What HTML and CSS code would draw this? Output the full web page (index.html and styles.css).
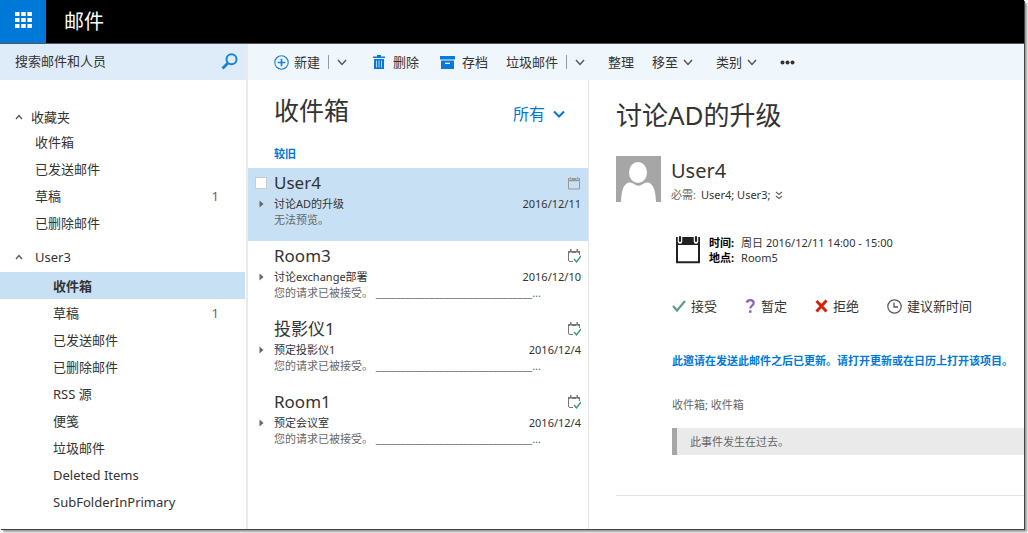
FILE: index.html
```html
<!DOCTYPE html>
<html lang="zh-CN">
<head>
<meta charset="utf-8">
<title>邮件</title>
<link rel="stylesheet" href="styles.css">
</head>
<body>
<svg class="symbols" aria-hidden="true">
  <symbol id="chevron" viewBox="0 0 10 7"><path d="M1 1l4 4.500L9 1" fill="none" stroke="currentColor" stroke-width="1.400"/></symbol>
  <symbol id="chevron-bold" viewBox="0 0 12 8"><path d="M1 1.500l5 5 5-5" fill="none" stroke="currentColor" stroke-width="2"/></symbol>
  <symbol id="caret-up" viewBox="0 0 8 6"><path d="M1 5l3-3.500L7 5" fill="none" stroke="currentColor" stroke-width="1.300"/></symbol>
  <symbol id="expand" viewBox="0 0 5 8"><path d="M.5 .5l4 3.500-4 3.500z" fill="currentColor"/></symbol>
  <symbol id="event" viewBox="0 0 14 14"><path d="M1.500 3v10h11V3" fill="none" stroke="currentColor"/><path d="M1 2h1.500v2H1zM4.500 2h5v2h-5zM11.500 2H13v2h-1.500zM1 4h12v1.200H1zM3 1h1v2.500H3zM10 1h1v2.500h-1z" fill="currentColor"/></symbol>
  <symbol id="event-ok" viewBox="0 0 14 14"><path d="M6 12.500H3Q1.500 12.500 1.500 11V3.500M12.500 3v3" fill="none" stroke="#777"/><path d="M1 2h2.500v2H1zM4.500 2h5v2h-5zM10.500 2H13v2h-2.500zM3 0h1.500v3H3zM9.500 0H11v3H9.500z" fill="#777"/><path d="M7 10l2.500 2.800L14 7" fill="none" stroke="#3f9d7c" stroke-width="1.400"/></symbol>
</svg>
<div class="app">
  <header class="topbar">
    <button class="launcher" aria-label="应用启动器">
      <svg width="17" height="16" viewBox="0 0 17 16" fill="#fff"><path d="M0 0h4.500v4H0zM6.200 0h4.500v4H6.200zM12.400 0h4.500v4h-4.500zM0 6h4.500v4H0zM6.200 6h4.500v4H6.200zM12.400 6h4.500v4h-4.500zM0 12h4.500v4H0zM6.200 12h4.500v4H6.200zM12.400 12h4.500v4h-4.500z"/></svg>
    </button>
    <h1 class="brand">邮件</h1>
  </header>
  <div class="body">
    <aside class="sidebar">
      <form class="search">
        <input class="search-input" type="text" placeholder="搜索邮件和人员" aria-label="搜索邮件和人员">
        <button class="search-button" type="button" aria-label="搜索">
          <svg width="17" height="17" viewBox="0 0 17 17" fill="none" stroke="#1b80d8"><circle cx="10.500" cy="6.300" r="5" stroke-width="2"/><path d="M7 10l-5.500 5.500" stroke-width="2.800"/></svg>
        </button>
      </form>
      <nav class="folders">
        <section class="group">
          <h2 class="group-title"><svg class="caret"><use href="#caret-up"/></svg>收藏夹</h2>
          <ul class="folder-list favorites">
            <li><a class="folder" href="#">收件箱</a></li>
            <li><a class="folder" href="#">已发送邮件</a></li>
            <li><a class="folder" href="#">草稿<span class="count">1</span></a></li>
            <li><a class="folder" href="#">已删除邮件</a></li>
          </ul>
        </section>
        <section class="group">
          <h2 class="group-title account"><svg class="caret"><use href="#caret-up"/></svg>User3</h2>
          <ul class="folder-list mailbox">
            <li><a class="folder current" href="#">收件箱</a></li>
            <li><a class="folder" href="#">草稿<span class="count">1</span></a></li>
            <li><a class="folder" href="#">已发送邮件</a></li>
            <li><a class="folder" href="#">已删除邮件</a></li>
            <li><a class="folder" href="#">RSS 源</a></li>
            <li><a class="folder" href="#">便笺</a></li>
            <li><a class="folder" href="#">垃圾邮件</a></li>
            <li><a class="folder" href="#">Deleted Items</a></li>
            <li><a class="folder" href="#">SubFolderInPrimary</a></li>
          </ul>
        </section>
      </nav>
    </aside>
    <main class="main">
      <div class="toolbar">
        <div class="split">
          <button class="tool"><svg width="15" height="15" viewBox="0 0 15 15" fill="none" stroke="#1b80d8"><circle cx="7.500" cy="7.500" r="6.700" stroke-width="1.100"/><path d="M7.500 3.700v7.600M3.700 7.500h7.600" stroke-width="1.700"/></svg>新建</button>
          <span class="divider"></span>
          <button class="tool more" aria-label="新建选项"><svg class="chevron"><use href="#chevron"/></svg></button>
        </div>
        <button class="tool"><svg width="18" height="14" viewBox="0 0 18 14" fill="#0a78d6"><path d="M3 1.500h4V0h4v1.500h4V3H3zM4 4h10v10H4z"/><path d="M6.500 5.500v7M9 5.500v7M11.500 5.500v7" stroke="#c3def5" stroke-width=".9"/></svg>删除</button>
        <button class="tool"><svg width="20" height="13" viewBox="0 0 20 13" fill="#0a78d6"><path d="M3 0h15v3.500H3zM4 4.500h13V13H4z"/><path d="M8 7.300h5" stroke="#fff" stroke-width="1.200"/></svg>存档</button>
        <div class="split">
          <button class="tool">垃圾邮件</button>
          <span class="divider"></span>
          <button class="tool more" aria-label="垃圾邮件选项"><svg class="chevron"><use href="#chevron"/></svg></button>
        </div>
        <button class="tool">整理</button>
        <button class="tool more">移至<svg class="chevron"><use href="#chevron"/></svg></button>
        <button class="tool more">类别<svg class="chevron"><use href="#chevron"/></svg></button>
        <button class="tool" aria-label="更多"><svg width="15" height="5" viewBox="0 0 15 5" fill="#333"><circle cx="2.500" cy="2.500" r="2"/><circle cx="7.500" cy="2.500" r="2"/><circle cx="12.500" cy="2.500" r="2"/></svg></button>
      </div>
      <div class="panes">
        <section class="messages">
          <div class="messages-head">
            <h2 class="pane-title">收件箱</h2>
            <button class="filter">所有<svg width="12" height="8"><use href="#chevron-bold"/></svg></button>
          </div>
          <h3 class="period">较旧</h3>
          <ul class="message-list">
            <li class="message selected">
              <input class="pick" type="checkbox" aria-label="选择 User4">
              <span class="sender">User4</span><svg class="event muted"><use href="#event"/></svg>
              <svg class="expand"><use href="#expand"/></svg>
              <span class="subject">讨论AD的升级</span><time class="date">2016/12/11</time>
              <p class="preview">无法预览。</p>
            </li>
            <li class="message">
              <span class="sender">Room3</span><svg class="event"><use href="#event-ok"/></svg>
              <svg class="expand"><use href="#expand"/></svg>
              <span class="subject">讨论exchange部署</span><time class="date">2016/12/10</time>
              <p class="preview">您的请求已被接受。 ________________________________...</p>
            </li>
            <li class="message">
              <span class="sender">投影仪1</span><svg class="event"><use href="#event-ok"/></svg>
              <svg class="expand"><use href="#expand"/></svg>
              <span class="subject">预定投影仪1</span><time class="date">2016/12/4</time>
              <p class="preview">您的请求已被接受。 ________________________________...</p>
            </li>
            <li class="message">
              <span class="sender">Room1</span><svg class="event"><use href="#event-ok"/></svg>
              <svg class="expand"><use href="#expand"/></svg>
              <span class="subject">预定会议室</span><time class="date">2016/12/4</time>
              <p class="preview">您的请求已被接受。 ________________________________...</p>
            </li>
          </ul>
        </section>
        <article class="reading">
          <h2 class="mail-title">讨论AD的升级</h2>
          <div class="from">
            <svg class="avatar" viewBox="0 0 45 46"><path d="M0 0h45v46H0z" fill="#a6a6a6"/><ellipse cx="22" cy="16.500" rx="9" ry="10.500" fill="#fff"/><path d="M5 46C5.500 35 7 28 13 26.500Q16 26 18 28Q22 31.500 27 28Q29 26 32 26.500C38 28 39.500 35 40 46z" fill="#fff"/></svg>
            <div>
              <div class="from-name">User4</div>
              <div class="to"><span class="to-label">必需:</span> User4; User3; <button class="details" aria-label="显示详细信息"><svg width="8" height="9" viewBox="0 0 8 9" fill="none" stroke="#666" stroke-width="1.200"><path d="M1 1l3 2.500L7 1M1 5l3 2.500L7 5"/></svg></button></div>
            </div>
          </div>
          <div class="details-area">
            <div class="when">
              <svg width="26" height="29" viewBox="0 0 26 29"><path d="M2 9v18.200h22V9" fill="none" stroke="#222" stroke-width="2"/><path d="M1 2h24v8H1z" fill="#222"/><path d="M5 1.500v5M21 1.500v5" stroke="#fff" stroke-width="4.500" stroke-linecap="round"/><path d="M5 2v4M21 2v4" stroke="#222" stroke-width="2.200" stroke-linecap="round"/></svg>
              <dl class="facts">
                <dt>时间:</dt><dd>周日 2016/12/11 14:00 - 15:00</dd>
                <dt>地点:</dt><dd>Room5</dd>
              </dl>
            </div>
            <div class="responses">
              <button class="respond"><svg width="14" height="14" viewBox="0 0 14 14"><path d="M1 7l4 4.500L13 2" fill="none" stroke="#5aa086" stroke-width="2.200"/></svg>接受</button>
              <button class="respond"><svg width="11" height="14" viewBox="0 0 11 14"><path d="M1.700 3.600Q2.500 1.200 5 1.200Q8.700 1.200 8.700 4Q8.700 5.500 7 6.600Q5.300 7.700 5.300 9.500" fill="none" stroke="#9060bd" stroke-width="2.200"/><path d="M4 11.300h2.500v2.500H4z" fill="#9060bd"/></svg>暂定</button>
              <button class="respond"><svg width="13" height="14" viewBox="0 0 13 14"><path d="M1.500 2l10 10.500M11.500 1.500L1.500 12.500" fill="none" stroke="#d9200b" stroke-width="3"/></svg>拒绝</button>
              <button class="respond"><svg width="15" height="15" viewBox="0 0 15 15" fill="none" stroke="#555"><circle cx="7.500" cy="7.500" r="6.700" stroke-width="1.200"/><path d="M7 3.500V8h4" stroke-width="1.300"/></svg>建议新时间</button>
            </div>
            <a class="updated" href="#">此邀请在发送此邮件之后已更新。请打开更新或在日历上打开该项目。</a>
            <p class="location">收件箱; 收件箱</p>
            <p class="notice">此事件发生在过去。</p>
          </div>
          <hr class="rule">
        </article>
      </div>
    </main>
  </div>
</div>
</body>
</html>
```
FILE: styles.css
```css
* { box-sizing: border-box; }
body {
  margin: 0;
  padding: 0 4px 4px 0;
  background: #fff;
  color: #333;
  font: 13px/18px "Noto Sans", "Noto Sans CJK SC", sans-serif;
}
h1, h2, h3, p, ul, dl, dd { margin: 0; padding: 0; font-weight: 400; }
ul { list-style: none; }
a { color: inherit; text-decoration: none; }
button { padding: 0; border: 0; background: none; color: inherit; font: inherit; cursor: pointer; }
svg { flex: none; display: block; }
.symbols { position: absolute; width: 0; height: 0; }

.app {
  display: flex;
  flex-direction: column;
  min-height: calc(100vh - 4px);
  background: #fff;
  box-shadow: 1px 1px 0 #444, 3px 3px 2px #999;
}
.topbar { display: flex; align-items: center; gap: 18px; height: 44px; background: #000; border-bottom: 1px solid #555; }
.launcher { display: flex; align-items: center; justify-content: center; width: 46px; height: 43px; background: #0078d7; padding-bottom: 4px; }
.brand { color: #fff; font-size: 20px; line-height: 28px; }
.body { display: flex; flex: 1; }

.sidebar { flex: none; width: 248px; border-right: 2px solid #eaeaea; }
.search { display: flex; align-items: center; height: 36px; padding: 0 8px 2px 15px; background: #deecf9; }
.search-input { flex: 1; min-width: 0; padding: 0; border: 0; outline: 0; background: none; color: #333; font: inherit; }
.search-input::placeholder { color: #333; opacity: 1; }
.folders { display: flex; flex-direction: column; gap: 10px; padding-top: 26px; }
.group-title { display: flex; align-items: center; gap: 8px; height: 22px; padding-left: 15px; font-size: 13px; }
.account { gap: 12px; }
.caret { width: 8px; height: 6px; color: #555; }
.folder { display: flex; align-items: center; justify-content: space-between; height: 27px; margin-right: 1px; padding: 0 26px 0 35px; }
.mailbox { padding-top: 4px; }
.mailbox .folder { padding-left: 53px; }
.current { background: #c7e0f4; font-weight: 700; }
.count { color: #666; }

.main { flex: 1; min-width: 0; display: flex; flex-direction: column; }
.toolbar { display: flex; align-items: center; gap: 18px; height: 36px; padding-left: 26px; background: #eff6fc; }
.tool { display: flex; align-items: center; gap: 5px; white-space: nowrap; }
.more { padding-right: 5px; }
.split { display: flex; align-items: center; gap: 8px; }
.divider { width: 1px; height: 14px; background: #999; }
.chevron { width: 10px; height: 7px; color: #555; }
.panes { display: flex; flex: 1; }

.messages { flex: none; width: 341px; border-right: 1px solid #e4e4e4; }
.messages-head { display: flex; align-items: center; justify-content: space-between; padding: 12px 23px 0 26px; }
.pane-title { font-size: 25px; line-height: 36px; }
.filter { display: flex; align-items: center; gap: 8px; padding-top: 8px; color: #0078d7; font-size: 16px; line-height: 24px; }
.period { padding: 17px 26px 5px; color: #0078d7; font-size: 11px; font-weight: 700; }
.message {
  display: grid;
  grid-template-columns: 12px 1fr auto;
  align-items: center;
  align-content: start;
  column-gap: 7px;
  height: 73px;
  padding: 2px 7px 0;
  font-size: 11px;
  line-height: 16px;
}
.selected { background: #c7e0f4; }
.pick { appearance: none; width: 12px; height: 12px; margin: 0; border: 1px solid #ccc; background: #fff; }
.sender { grid-column: 2; font-size: 17px; line-height: 26px; }
.event { width: 14px; height: 14px; justify-self: end; }
.muted { color: #999; }
.expand { width: 5px; height: 8px; justify-self: center; color: #666; }
.preview { grid-column: 2 / 4; color: #666; white-space: nowrap; overflow: hidden; }

.reading { flex: 1; min-width: 0; padding: 16px 0 0 27px; }
.mail-title { font-size: 26px; line-height: 38px; }
.from { display: flex; gap: 10px; padding-top: 22px; }
.avatar { width: 45px; height: 46px; }
.from-name { font-size: 20px; line-height: 30px; }
.to { display: flex; align-items: center; gap: 5px; font-size: 11px; }
.to-label { color: #666; }
.details-area { padding-left: 56px; }
.when { display: flex; gap: 8px; padding: 31px 0 0 3px; font-size: 11px; line-height: 15px; }
.facts { display: grid; grid-template-columns: auto 1fr; column-gap: 7px; }
.facts dt { color: #000; font-weight: 700; }
.responses { display: flex; gap: 28px; padding-top: 32px; }
.respond { display: flex; align-items: center; gap: 5px; white-space: nowrap; }
.updated { display: block; padding-top: 37px; color: #0078d7; font-size: 11px; font-weight: 700; }
.location { padding-top: 26px; color: #666; font-size: 11px; }
.notice { margin-top: 14px; padding: 5px 13px; border-left: 5px solid #a6a6a6; background: #eaeaea; color: #666; font-size: 11px; line-height: 17px; }
.rule { margin: 40px 0 0; border: 0; border-top: 1px solid #e4e4e4; }
```
